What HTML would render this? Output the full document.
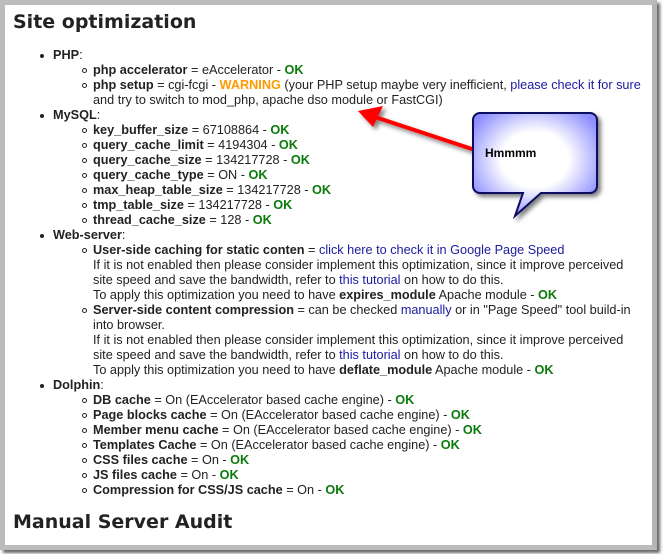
<!DOCTYPE html>
<html><head><meta charset="utf-8"><style>
html,body{margin:0;padding:0;background:#fff;width:664px;height:554px;overflow:hidden}
.frame{position:absolute;left:0;top:0;width:647px;height:540px;border:5px solid #bcbcbc;border-right-color:#b5b5b5;background:#fff;box-shadow:3px 3px 3px #666}
.l{position:absolute;white-space:nowrap;font:12.7px/15px "Liberation Sans","DejaVu Sans",sans-serif;color:#222}
b{color:#222}
.ok{color:#0a7a0a;font-weight:bold}
.w{color:#ff9a00;font-weight:bold}
a{color:#1a1aa0;text-decoration:none}
h1{position:absolute;margin:0;font:bold 19px "DejaVu Sans","Liberation Sans",sans-serif;color:#222;left:13px}
.d1:before{content:"";position:absolute;left:-13px;top:6px;width:4px;height:4px;border-radius:50%;background:#222}
.d2:before{content:"";position:absolute;left:-11px;top:5px;width:3px;height:3px;border-radius:50%;border:1px solid #222}
</style></head><body>
<div class="frame"></div>
<h1 style="top:11px">Site optimization</h1>
<div class="l d1" style="left:53px;top:48px"><b>PHP</b>:</div>
<div class="l d2" style="left:93px;top:63px"><b>php accelerator</b> = eAccelerator - <span class="ok">OK</span></div>
<div class="l d2" style="left:93px;top:78px"><b>php setup</b> = cgi-fcgi - <span class="w">WARNING</span> (your PHP setup maybe very inefficient, <a>please check it for sure</a></div>
<div class="l" style="left:93px;top:93px">and try to switch to mod_php, apache dso module or FastCGI)</div>
<div class="l d1" style="left:53px;top:108px"><b>MySQL</b>:</div>
<div class="l d2" style="left:93px;top:123px"><b>key_buffer_size</b> = 67108864 - <span class="ok">OK</span></div>
<div class="l d2" style="left:93px;top:138px"><b>query_cache_limit</b> = 4194304 - <span class="ok">OK</span></div>
<div class="l d2" style="left:93px;top:153px"><b>query_cache_size</b> = 134217728 - <span class="ok">OK</span></div>
<div class="l d2" style="left:93px;top:168px"><b>query_cache_type</b> = ON - <span class="ok">OK</span></div>
<div class="l d2" style="left:93px;top:183px"><b>max_heap_table_size</b> = 134217728 - <span class="ok">OK</span></div>
<div class="l d2" style="left:93px;top:198px"><b>tmp_table_size</b> = 134217728 - <span class="ok">OK</span></div>
<div class="l d2" style="left:93px;top:213px"><b>thread_cache_size</b> = 128 - <span class="ok">OK</span></div>
<div class="l d1" style="left:53px;top:228px"><b>Web-server</b>:</div>
<div class="l d2" style="left:93px;top:243px"><b>User-side caching for static conten</b> = <a>click here to check it in Google Page Speed</a></div>
<div class="l" style="left:93px;top:258px">If it is not enabled then please consider implement this optimization, since it improve perceived</div>
<div class="l" style="left:93px;top:273px">site speed and save the bandwidth, refer to <a>this tutorial</a> on how to do this.</div>
<div class="l" style="left:93px;top:288px">To apply this optimization you need to have <b>expires_module</b> Apache module - <span class="ok">OK</span></div>
<div class="l d2" style="left:93px;top:303px"><b>Server-side content compression</b> = can be checked <a>manually</a> or in "Page Speed" tool build-in</div>
<div class="l" style="left:93px;top:318px">into browser.</div>
<div class="l" style="left:93px;top:333px">If it is not enabled then please consider implement this optimization, since it improve perceived</div>
<div class="l" style="left:93px;top:348px">site speed and save the bandwidth, refer to <a>this tutorial</a> on how to do this.</div>
<div class="l" style="left:93px;top:363px">To apply this optimization you need to have <b>deflate_module</b> Apache module - <span class="ok">OK</span></div>
<div class="l d1" style="left:53px;top:378px"><b>Dolphin</b>:</div>
<div class="l d2" style="left:93px;top:393px"><b>DB cache</b> = On (EAccelerator based cache engine) - <span class="ok">OK</span></div>
<div class="l d2" style="left:93px;top:408px"><b>Page blocks cache</b> = On (EAccelerator based cache engine) - <span class="ok">OK</span></div>
<div class="l d2" style="left:93px;top:423px"><b>Member menu cache</b> = On (EAccelerator based cache engine) - <span class="ok">OK</span></div>
<div class="l d2" style="left:93px;top:438px"><b>Templates Cache</b> = On (EAccelerator based cache engine) - <span class="ok">OK</span></div>
<div class="l d2" style="left:93px;top:453px"><b>CSS files cache</b> = On - <span class="ok">OK</span></div>
<div class="l d2" style="left:93px;top:468px"><b>JS files cache</b> = On - <span class="ok">OK</span></div>
<div class="l d2" style="left:93px;top:483px"><b>Compression for CSS/JS cache</b> = On - <span class="ok">OK</span></div>
<h1 style="top:511px">Manual Server Audit</h1>
<svg style="position:absolute;left:0;top:0" width="664" height="554">
<defs><radialGradient id="g" cx="50%" cy="45%" r="60%"><stop offset="0.45" stop-color="#fff"/><stop offset="1" stop-color="#8c8cff"/></radialGradient>
<filter id="s"><feDropShadow dx="3" dy="3" stdDeviation="2" flood-color="#000" flood-opacity="0.5"/></filter></defs>
<g filter="url(#s)">
<line x1="475" y1="150" x2="375" y2="117" stroke="#f00" stroke-width="4"/>
<polygon points="358,111 383,106 373,127" fill="#f00"/>
<path d="M480,113 H590 a7,7 0 0 1 7,7 V186 a7,7 0 0 1 -7,7 H541 L515,216 L523,193 H480 a7,7 0 0 1 -7,-7 V120 a7,7 0 0 1 7,-7Z" fill="url(#g)" stroke="#0a0a60" stroke-width="2"/>
</g>
<text x="485" y="157" font-family="Liberation Sans,sans-serif" font-weight="bold" font-size="12" fill="#000">Hmmmm</text>
</svg>
</body></html>
